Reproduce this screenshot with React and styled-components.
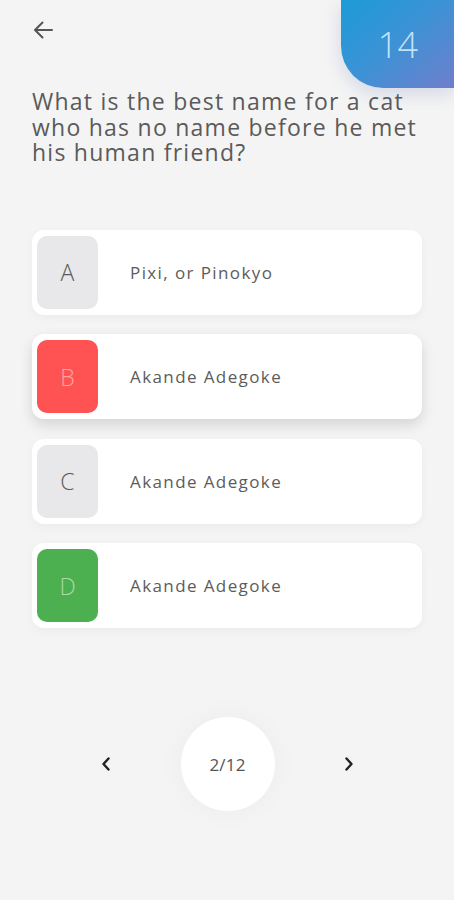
import React from "react";
import styled, { createGlobalStyle } from "styled-components";

const Global = createGlobalStyle`
  html, body { margin: 0; padding: 0; background: #f4f4f4; }
  body { font-family: "Open Sans", "Noto Sans", sans-serif; color: #555; }
  * { box-sizing: border-box; }
`;

const Page = styled.div`
  position: relative;
  width: 454px;
  min-height: 900px;
  overflow: hidden;
  background: #f4f4f4;
  display: flex;
  flex-direction: column;
`;

const Badge = styled.div`
  position: absolute;
  top: 0;
  right: 0;
  width: 113px;
  height: 88px;
  border-bottom-left-radius: 42px;
  background: linear-gradient(140deg, #1d9bd6 0%, #3a93d6 45%, #6f7ecb 100%);
  box-shadow: 0 6px 18px rgba(60, 90, 160, 0.18);
  display: flex;
  align-items: center;
  justify-content: center;
  color: #bfe3f5;
  font-size: 36px;
  font-weight: 300;
  letter-spacing: -0.5px;
`;

const Header = styled.div`
  height: 62px;
  padding: 21px 0 0 33px;
  display: flex;
  align-items: flex-start;
`;

const BackButton = styled.button`
  border: 0;
  background: none;
  padding: 0;
  width: 20px;
  height: 18px;
  display: flex;
  color: #555;
`;

const Question = styled.h1`
  margin: 27px 0 0 32px;
  font-size: 23px;
  line-height: 25.5px;
  font-weight: 500;
  color: #5a5a5a;
  letter-spacing: 1.25px;
  white-space: nowrap;
`;

const Options = styled.div`
  margin: 64px 0 0 32px;
  width: 390px;
  display: flex;
  flex-direction: column;
  gap: 19.5px;
`;

const Card = styled.div`
  height: 85px;
  padding: 6px 5px;
  background: #fff;
  border-radius: 12px;
  display: flex;
  align-items: center;
  box-shadow: ${(p) =>
    p.$raised
      ? "0 6px 14px rgba(0,0,0,0.13)"
      : "0 3px 10px rgba(0,0,0,0.04)"};
`;

const palette = {
  neutral: { bg: "#e8e8ea", fg: "#5a5a5a" },
  wrong: { bg: "#ff5252", fg: "#ffa3a3" },
  right: { bg: "#4caf50", fg: "#a8dca9" },
};

const Letter = styled.div`
  width: 61px;
  height: 73px;
  border-radius: 10px;
  flex: none;
  display: flex;
  align-items: center;
  justify-content: center;
  font-size: 23px;
  font-weight: 300;
  background: ${(p) => palette[p.$state].bg};
  color: ${(p) => palette[p.$state].fg};
`;

const Answer = styled.span`
  margin-left: 32px;
  font-size: 17px;
  color: #5c5c5c;
  letter-spacing: 1.4px;
`;

const Pager = styled.div`
  margin-top: 89px;
  display: flex;
  align-items: center;
  justify-content: center;
`;

const Arrow = styled.button`
  border: 0;
  background: none;
  padding: 0;
  width: 10px;
  height: 14px;
  display: flex;
  color: #222;
  margin: ${(p) => (p.$side === "left" ? "0 70px 0 0" : "0 0 0 69px")};
`;

const Counter = styled.div`
  width: 94px;
  height: 94px;
  border-radius: 50%;
  background: #fff;
  box-shadow: 0 0 30px rgba(0,0,0,0.035);
  display: flex;
  align-items: center;
  justify-content: center;
  font-size: 17px;
  color: #555;
  letter-spacing: 0.2px;
`;

const options = [
  { key: "A", text: "Pixi, or Pinokyo", state: "neutral" },
  { key: "B", text: "Akande Adegoke", state: "wrong", raised: true },
  { key: "C", text: "Akande Adegoke", state: "neutral" },
  { key: "D", text: "Akande Adegoke", state: "right" },
];

export default function App() {
  return (
    <Page>
      <Global />
      <Badge>14</Badge>
      <Header>
        <BackButton aria-label="back">
          <svg width="20" height="18" viewBox="0 0 20 18" fill="none" stroke="currentColor" strokeWidth="2" strokeLinecap="round" strokeLinejoin="round">
            <path d="M19 9H2M9.5 1.5L2 9l7.5 7.5" />
          </svg>
        </BackButton>
      </Header>
      <Question>
        What is the best name for a cat
        <br />
        who has no name before he met
        <br />
        his human friend?
      </Question>
      <Options>
        {options.map((o) => (
          <Card key={o.key} $raised={o.raised}>
            <Letter $state={o.state}>{o.key}</Letter>
            <Answer>{o.text}</Answer>
          </Card>
        ))}
      </Options>
      <Pager>
        <Arrow $side="left" aria-label="previous">
          <svg width="10" height="14" viewBox="0 0 10 14" fill="none" stroke="currentColor" strokeWidth="2.4" strokeLinecap="round" strokeLinejoin="round">
            <path d="M7.5 1.5L2.5 7l5 5.5" />
          </svg>
        </Arrow>
        <Counter>2/12</Counter>
        <Arrow $side="right" aria-label="next">
          <svg width="10" height="14" viewBox="0 0 10 14" fill="none" stroke="currentColor" strokeWidth="2.4" strokeLinecap="round" strokeLinejoin="round">
            <path d="M2.5 1.5L7.5 7l-5 5.5" />
          </svg>
        </Arrow>
      </Pager>
    </Page>
  );
}
